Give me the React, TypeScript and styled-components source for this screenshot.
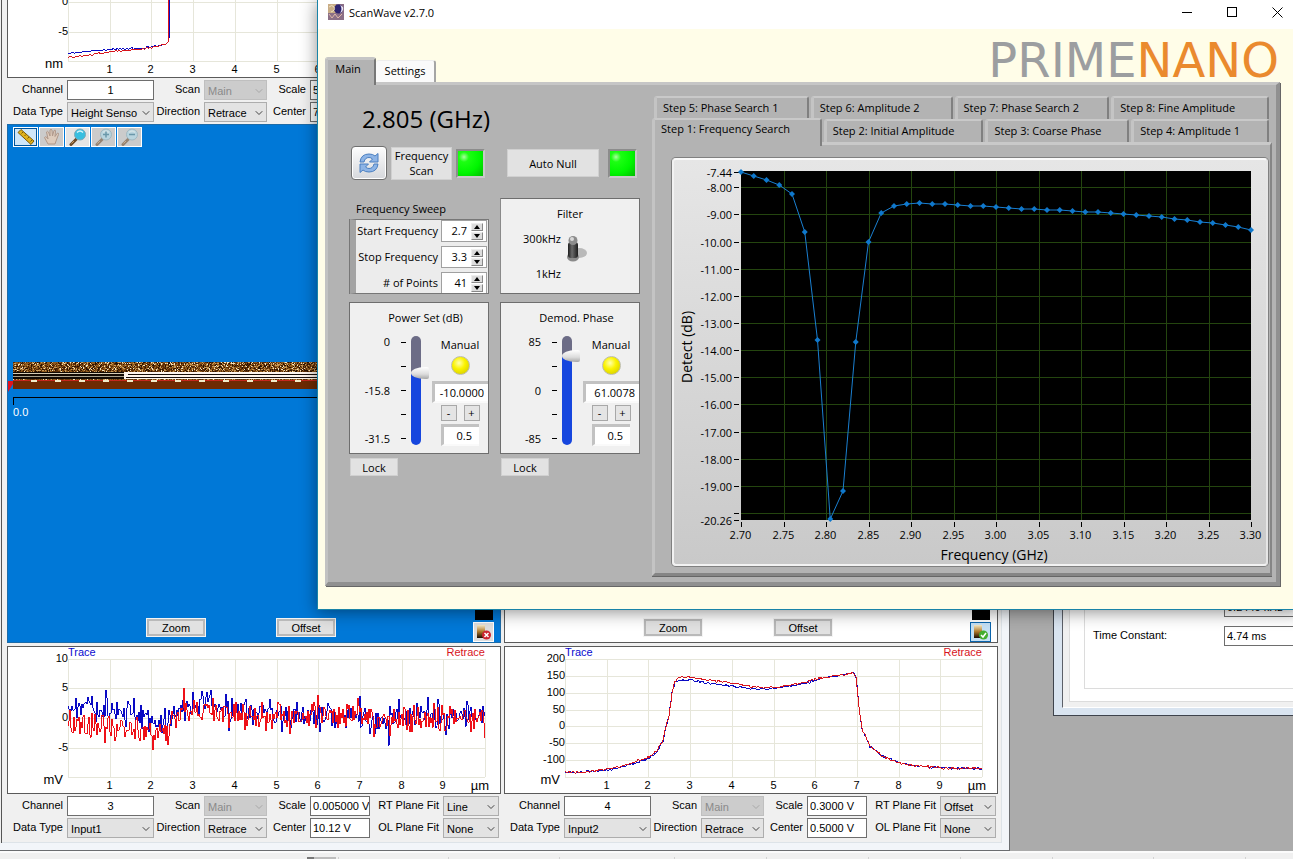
import React from 'react';
import styled, { createGlobalStyle, css } from 'styled-components';
import { ChevronDown } from 'lucide-react';

const GlobalStyle = createGlobalStyle`
  * { box-sizing: border-box; }
  body { margin: 0; background: #ababab; }
  button, input, select { font: inherit; color: inherit; margin: 0; }
`;

const legacyFont = `"Liberation Sans", Arial, sans-serif`;
const panelFont = `"Open Sans", "Noto Sans", sans-serif`;

/* ---------- helpers ---------- */

type Pt = [number, number];

function makeRandom(seed: number) {
  let s = seed;
  return () => {
    s = (s * 1664525 + 1013904223) % 4294967296;
    return s / 4294967296;
  };
}

function interpolate(knots: Pt[], x: number) {
  for (let i = 1; i < knots.length; i++) {
    if (x <= knots[i][0]) {
      const [x0, y0] = knots[i - 1];
      const [x1, y1] = knots[i];
      return y0 + ((y1 - y0) * (x - x0)) / (x1 - x0 || 1);
    }
  }
  return knots[knots.length - 1][1];
}

function buildTrace(knots: Pt[], amplitude: number, seed: number, step = 1, spikes = 0) {
  const rnd = makeRandom(seed);
  const out: string[] = [];
  const start = knots[0][0];
  const end = knots[knots.length - 1][0];
  for (let x = start; x <= end; x += step) {
    let n = (rnd() + rnd() - 1) * amplitude;
    if (spikes && rnd() < 0.08) n += (rnd() - 0.5) * spikes;
    out.push(`${x},${Math.round(interpolate(knots, x) + n)}`);
  }
  return out.join(' ');
}

/* ---------- desktop ---------- */

const Screen = styled.div`
  position: relative;
  display: flex;
  flex-direction: column;
  min-height: 100vh;
  overflow: hidden;
  background: #ababab;
`;

const Desktop = styled.main`
  position: relative;
  flex: 1;
  min-height: 851px;
`;

const StatusBar = styled.footer`
  display: flex;
  height: 8px;
  padding-left: 307px;
  padding-top: 4px;
  border-top: 2px solid #fbfbfb;
  background: #f0f0f0;
`;

const StatusCell = styled.span<{ $w: number }>`
  width: ${(p) => p.$w}px;
  border-right: 1px solid #d2d2d2;
`;

const StatusThumb = styled.span`
  width: 29px;
  border-left: 7px solid #777;
  background: #bdbdbd;
`;

/* ---------- channel window ---------- */

const ChannelWindow = styled.section`
  position: absolute;
  left: 0;
  top: 0;
  display: flex;
  align-items: flex-end;
  gap: 3px;
  padding: 0 3px 2px 5px;
  margin-left: 2px;
  background: #f0f0f0;
  font: 11px/14px ${legacyFont};
  color: #000;
  box-shadow: 0 0 0 1px #dde3e8, 0 0 0 8px #f2f5f9, 0 0 0 9px #6b6d70;
`;

const LeftEdge = styled.div`
  position: absolute;
  left: 0;
  top: 0;
  width: 2px;
  height: 843px;
  background: #f0f0f0;
  border-right: 1px solid #555;
`;

const Column = styled.div`
  width: 494px;
`;

const ChartFrame = styled.div<{ $cut?: boolean }>`
  height: ${(p) => (p.$cut ? 78 : 148)}px;
  border: 1px solid #5a5a5a;
  border-top-width: ${(p) => (p.$cut ? 0 : 1)}px;
  background: #fff;
  overflow: hidden;
  svg { display: block; }
`;

interface Series { color: string; points: string }

function TraceChart(props: {
  cut?: boolean;
  ticks: [string, number][];
  unit: string;
  bottom: number;
  series: Series[];
}) {
  const { cut, ticks, unit, bottom, series } = props;
  const top = cut ? -60 : 12;
  const xs = cut ? [1, 2, 3, 4, 5, 6] : [1, 2, 3, 4, 5, 6, 7, 8, 9];
  const xAt = (n: number) => Math.round(60 + n * 41.7) + 0.5;
  return (
    <ChartFrame $cut={cut}>
      <svg width="492" height={cut ? 77 : 146} fontSize="11" fill="#000">
        <g stroke="#e6e6da">
          {[0, ...xs, 10].map((n) => (
            <line key={n} x1={xAt(n)} x2={xAt(n)} y1={top} y2={bottom} />
          ))}
          {ticks.map(([t, y]) => (
            <line key={t} x1="60" x2="477" y1={y + 0.5} y2={y + 0.5} />
          ))}
          <line x1="60" x2="477" y1={bottom + 0.5} y2={bottom + 0.5} />
        </g>
        {series.map((s, i) => (
          <polyline key={i} points={s.points} fill="none" stroke={s.color} shapeRendering="crispEdges" />
        ))}
        {ticks.map(([t, y]) => (
          <text key={t} x="60" y={y + 3} textAnchor="end">{t}</text>
        ))}
        {xs.map((n) => (
          <text key={n} x={xAt(n) - 1} y={bottom + 12} textAnchor="middle">{n}</text>
        ))}
        <text x="55" y={bottom + 7} fontSize="13" textAnchor="end">{unit}</text>
        {!cut && (
          <>
            <text x="481" y={bottom + 13} fontSize="13" textAnchor="end">µm</text>
            <text x="60" y="9" fill="#0a0ad0">Trace</text>
            <text x="477" y="9" fill="#d8141c" textAnchor="end">Retrace</text>
          </>
        )}
      </svg>
    </ChartFrame>
  );
}

const Controls = styled.div`
  display: grid;
  grid-template-columns: 56px 87px 42px 63px 35px 60px 65px 56px;
  grid-auto-rows: 20px;
  gap: 2px 4px;
  padding: 2px 0;
`;

const FieldLabel = styled.label`
  display: flex;
  justify-content: flex-end;
  white-space: nowrap;
  line-height: 18px;
`;

const TextBox = styled.input<{ $center?: boolean }>`
  width: 100%;
  height: 20px;
  padding: 0 0 0 ${(p) => (p.$center ? 0 : 2)}px;
  border: 1px solid #6e6e6e;
  background: #fff;
  text-align: ${(p) => (p.$center ? 'center' : 'left')};
`;

const SelectWrap = styled.div<{ $disabled?: boolean }>`
  position: relative;
  height: 20px;
  color: ${(p) => (p.$disabled ? '#8a8a8a' : '#000')};
  svg {
    position: absolute;
    right: 2px;
    top: 5px;
    color: ${(p) => (p.$disabled ? '#a8a8a8' : '#444')};
    pointer-events: none;
  }
`;

const SelectBox = styled.select`
  appearance: none;
  width: 100%;
  height: 20px;
  padding: 1px 15px 0 3px;
  border: 1px solid #adadad;
  border-radius: 0;
  background: #e3e3e3;
  opacity: 1;
  &:disabled { background: #cccccc; border-color: #bfbfbf; color: #8a8a8a; }
`;

function Picker({ id, value, disabled }: { id: string; value: string; disabled?: boolean }) {
  return (
    <SelectWrap $disabled={disabled}>
      <SelectBox id={id} disabled={disabled} defaultValue={value}>
        <option>{value}</option>
      </SelectBox>
      <ChevronDown size={12} strokeWidth={2} />
    </SelectWrap>
  );
}

function ChannelControls(props: {
  channel: string; dataType: string; scale: string; center: string; rt?: string; ol?: string;
}) {
  const { channel, dataType, scale, center, rt, ol } = props;
  const id = (n: string) => `ch${channel}-${n}`;
  return (
    <Controls>
      <FieldLabel htmlFor={id('channel')}>Channel</FieldLabel>
      <TextBox id={id('channel')} $center defaultValue={channel} />
      <FieldLabel htmlFor={id('scan')}>Scan</FieldLabel>
      <Picker id={id('scan')} value="Main" disabled />
      <FieldLabel htmlFor={id('scale')}>Scale</FieldLabel>
      <TextBox id={id('scale')} defaultValue={scale} />
      {rt ? <FieldLabel htmlFor={id('rt')}>RT Plane Fit</FieldLabel> : <span />}
      {rt ? <Picker id={id('rt')} value={rt} /> : <span />}
      <FieldLabel htmlFor={id('type')}>Data Type</FieldLabel>
      <Picker id={id('type')} value={dataType} />
      <FieldLabel htmlFor={id('dir')}>Direction</FieldLabel>
      <Picker id={id('dir')} value="Retrace" />
      <FieldLabel htmlFor={id('center')}>Center</FieldLabel>
      <TextBox id={id('center')} defaultValue={center} />
      {ol ? <FieldLabel htmlFor={id('ol')}>OL Plane Fit</FieldLabel> : <span />}
      {ol ? <Picker id={id('ol')} value={ol} /> : <span />}
    </Controls>
  );
}

const ImageView = styled.div<{ $blue?: boolean }>`
  display: flex;
  flex-direction: column;
  height: 519px;
  margin-bottom: 3px;
  background: ${(p) => (p.$blue ? '#0078d7' : '#fff')};
  border: 1px solid ${(p) => (p.$blue ? '#1d6ba8' : '#5a5a5a')};
`;

const ToolRow = styled.div`
  display: flex;
  gap: 1px;
  padding: 2px 5px;
`;

const ToolButton = styled.button<{ $state?: 'on' | 'ready' }>`
  display: flex;
  align-items: center;
  justify-content: center;
  width: 25px;
  height: 20px;
  padding: 0;
  border: 1px solid #fff;
  background: ${(p) => (p.$state === 'on' ? '#cfe6f8' : p.$state === 'ready' ? '#e4e4e4' : '#cbcbcb')};
  ${(p) => p.$state === 'on' && css`box-shadow: inset 0 0 0 1px #00549a;`}
  svg { opacity: ${(p) => (p.$state ? 1 : 0.55)}; }
`;

const Lens = ({ sign }: { sign?: string }) => (
  <svg width="18" height="18" viewBox="0 0 18 18">
    <path d="M2 16.5 L8 10.5" stroke="#6b4a2a" strokeWidth="3" strokeLinecap="round" />
    <path d="M2.5 15.5 L5 13" stroke="#c99a63" strokeWidth="1" />
    <circle cx="11" cy="6.5" r="5.5" fill={sign ? '#a9dcee' : '#38bfe0'} stroke="#7fa9b8" />
    <path d="M8 4.5 Q11 1.5 14 4.5" stroke="#d9f5fb" fill="none" strokeWidth="1.5" />
    {sign && <path d={sign} stroke="#1c6f90" strokeWidth="1.5" />}
  </svg>
);

const Scanline = styled.svg`
  display: block;
  margin-top: 213px;
  flex: none;
`;

function HeightMap() {
  const rnd = makeRandom(77);
  const palette = ['#2a1200', '#5b2c06', '#8f5a1c', '#c79a5a', '#f3e3bd'];
  const paths = palette.map(() => '');
  for (let y = 0; y < 19; y++) {
    for (let x = 5; x < 316; x += 1) {
      const r = rnd();
      const k = r < 0.16 ? 0 : r < 0.48 ? 1 : r < 0.78 ? 2 : r < 0.93 ? 3 : 4;
      if (y < 11 || (y > 15 && r > 0.3)) paths[k] += `M${x} ${y}h1v1h-1z`;
    }
  }
  const dashes = Array.from({ length: 13 }, (_, i) => 23 + i * 24);
  return (
    <Scanline width="484" height="58" shapeRendering="crispEdges">
      <rect x="5" y="0" width="479" height="19" fill="#6a3a0c" />
      {paths.map((d, i) => <path key={i} d={d} fill={palette[i]} />)}
      <rect x="5" y="10" width="113" height="7" fill="#120a04" />
      <rect x="5" y="11" width="113" height="1" fill="#d8cdb4" />
      <rect x="5" y="14" width="113" height="1" fill="#a8a08c" />
      <rect x="116" y="10" width="368" height="7" fill="#fff6ee" />
      <rect x="120" y="12" width="364" height="1" fill="#17100c" />
      <rect x="118" y="15" width="366" height="1" fill="#17100c" />
      <rect x="5" y="19" width="479" height="8" fill="#6e2a02" />
      <path d="M5 18.5H484" stroke="#c6261c" />
      {dashes.map((x) => <rect key={x} x={x} y="18" width="6" height="2" fill="#f2ecc8" />)}
      <path d="M0 19h5v3l-5 8z" fill="#e3111d" shapeRendering="auto" />
      <path d="M5.5 43V35.500H484" stroke="#000" fill="none" />
      <text x="5" y="54" fontSize="11" fill="#fff">0.0</text>
    </Scanline>
  );
}

const ViewFooter = styled.div`
  display: flex;
  align-items: flex-end;
  margin-top: auto;
  padding: 0 6px 0 138px;
`;

const PushButton = styled.button`
  width: 60px;
  height: 19px;
  margin: 0 70px 5px 0;
  padding: 0;
  border: 1px solid #adadad;
  outline: 1px solid #f4f4f4;
  outline-offset: -1px;
  background: #e1e1e1;
  box-shadow: inset 0 0 0 2px #b9b9b9, inset 0 0 0 3px #e1e1e1;
`;

const ScaleStack = styled.div`
  display: flex;
  flex-direction: column;
  align-items: center;
  gap: 2px;
  margin-left: auto;
`;

const Swatch = styled.div`
  width: 18px;
  height: 14px;
  background: #000;
`;

const ScaleButton = styled.button<{ $on?: boolean }>`
  width: 21px;
  height: 20px;
  padding: 0;
  border: 1px solid ${(p) => (p.$on ? '#0a64ad' : '#fff')};
  background: ${(p) => (p.$on ? '#c5e0f5' : '#dedede')};
  svg { display: block; margin: 0 auto; }
`;

function ScaleIcon({ ok }: { ok: boolean }) {
  return (
    <svg width="17" height="16" viewBox="0 0 17 16">
      <defs>
        <linearGradient id={ok ? 'ramp-ok' : 'ramp-off'} x1="0" y1="0" x2="0" y2="1">
          <stop offset="0" stopColor="#f7ecc8" />
          <stop offset="0.5" stopColor="#b07a2c" />
          <stop offset="1" stopColor="#1c0d02" />
        </linearGradient>
      </defs>
      <rect x="2" y="1" width="8" height="13" fill={`url(#${ok ? 'ramp-ok' : 'ramp-off'})`} />
      <circle cx="11.500" cy="11" r="4.500" fill={ok ? '#43ad2e' : '#cc2430'} />
      <path d={ok ? 'M9 11l2 2 3-4' : 'M9.5 9l4 4M13.500 9l-4 4'} stroke="#fff" strokeWidth="1.500" fill="none" />
    </svg>
  );
}

function ViewActions({ ok }: { ok: boolean }) {
  return (
    <ViewFooter>
      <PushButton>Zoom</PushButton>
      <PushButton>Offset</PushButton>
      <ScaleStack>
        <Swatch />
        <ScaleButton $on={ok} aria-label="Auto scale"><ScaleIcon ok={ok} /></ScaleButton>
      </ScaleStack>
    </ViewFooter>
  );
}

const blue = '#0a0ac4';
const red = '#d8141c';

const heightSeries: Series[] = [
  { color: blue, points: buildTrace([[60, 53], [80, 51], [105, 49], [135, 48], [150, 45], [158, 44], [160, 42], [161, 38]], 1, 3) + ' 161,-5' },
  { color: red, points: buildTrace([[60, 57], [80, 55], [105, 51], [135, 49], [150, 46], [158, 44], [160, 42]], 1, 4) + ' 160,-5' },
];

const noiseSeries: Series[] = [
  { color: blue, points: buildTrace([[60, 66], [72, 58], [90, 62], [110, 65], [135, 68], [150, 71], [160, 75], [166, 67], [185, 57], [200, 56], [215, 60], [240, 64], [300, 68], [350, 71], [375, 76], [395, 68], [420, 68], [477, 69]], 15, 11, 1, 34) },
  { color: '#ee1018', points: buildTrace([[60, 75], [75, 78], [110, 82], [135, 84], [160, 88], [162, 70], [180, 64], [210, 64], [240, 69], [300, 68], [350, 69], [370, 78], [395, 71], [477, 70]], 16, 41, 1, 32) },
];

const plateau = (lift: number): Pt[] => [
  [60, 125], [78, 125], [102, 122 + lift], [118, 119 + lift], [142, 111 + lift], [152, 104 + lift], [158, 93 + lift],
  [161, 80], [164, 69], [167, 46], [170, 34 + lift], [174, 30 + lift * 3], [185, 30 + lift * 3], [202, 33 + lift * 3],
  [222, 35 + lift * 3], [250, 40 + lift * 2], [270, 40 + lift], [290, 37 + lift], [308, 33 + lift], [320, 30], [335, 28],
  [348, 26], [351, 29], [354, 60], [357, 82], [365, 99], [378, 109], [395, 116], [415, 119], [440, 121], [477, 121],
];

const plateauSeries: Series[] = [
  { color: blue, points: buildTrace(plateau(1), 1.6, 5) },
  { color: red, points: buildTrace(plateau(0), 1.6, 9) },
];

/* ---------- lock-in window ---------- */

const LockInWindow = styled.section`
  position: absolute;
  left: 1053px;
  right: -8px;
  top: 540px;
  height: 176px;
  padding: 0 0 7px 8px;
  border: 1px solid #3e434c;
  background: #d9e4f0;
  font: 11px/14px ${legacyFont};
`;

const LockInClient = styled.div`
  height: 100%;
  padding: 0 0 5px 6px;
  border-left: 1px solid #5c6068;
  border-bottom: 1px solid #fff;
  background: #f0f0f0;
`;

const LockInPage = styled.div`
  height: 100%;
  padding: 0 0 12px 14px;
  border: 1px solid #dcdcdc;
  background: #fff;
`;

const LockInGroup = styled.div`
  display: grid;
  grid-template-columns: 1fr 74px;
  row-gap: 9px;
  align-content: end;
  height: 100%;
  padding: 0 0 42px 8px;
  border: 1px solid #dcdcdc;
`;

const LockInLabel = styled.label`
  line-height: 18px;
`;

/* ---------- ScanWave window ---------- */

const WaveWindow = styled.section`
  position: absolute;
  left: 317px;
  right: -8px;
  top: 0;
  border: 1px solid #1883a8;
  border-top: 0;
  background: #fffde8;
  font: 11px/15px ${panelFont};
  color: #000;
  box-shadow: 0 2px 16px rgba(0, 0, 0, 0.45);
`;

const TitleBar = styled.header`
  display: flex;
  align-items: flex-start;
  height: 29px;
  padding: 4px 0 0 10px;
  background: #fff;
`;

const TitleText = styled.h1`
  flex: 1;
  margin: 0 0 0 5px;
  font: 11px/18px ${panelFont};
`;

const CaptionButton = styled.button`
  display: flex;
  align-items: center;
  justify-content: center;
  width: 45px;
  height: 17px;
  padding: 0;
  border: 0;
  background: none;
`;

const HeaderRow = styled.div`
  display: flex;
  align-items: flex-end;
  height: 53px;
  padding: 0 21px 0 7px;
`;

const Wordmark = styled.div`
  margin-left: auto;
  font: 48px/44px "DejaVu Sans", sans-serif;
  color: #9c9ea0;
  em { font-style: normal; color: #ea8a2e; }
`;

const MainTab = styled.button<{ $active?: boolean }>`
  position: relative;
  z-index: ${(p) => (p.$active ? 1 : 0)};
  width: ${(p) => (p.$active ? 51 : 60)}px;
  height: ${(p) => (p.$active ? 28 : 22)}px;
  margin-bottom: ${(p) => (p.$active ? -3 : 0)}px;
  padding: 0 ${(p) => (p.$active ? 6 : 0)}px ${(p) => (p.$active ? 9 : 2)}px 0;
  border: solid;
  border-width: ${(p) => (p.$active ? '3px 2px 0 3px' : '1px 2px 0 0')};
  border-color: ${(p) => (p.$active ? '#c6c6c6 #777 #b3b3b3 #c2c2c2' : '#eee #a5a5a5 #fff #fff')};
  border-radius: 3px 3px 0 0;
  background: ${(p) => (p.$active ? '#b3b3b3' : '#fafafa')};
`;

const MainPanel = styled.div`
  display: flex;
  align-items: flex-start;
  gap: 12px;
  height: 504px;
  margin: 0 20px 23px 7px;
  padding: 11px 4px 0 21px;
  border: solid;
  border-width: 3px 4px 4px 3px;
  border-color: #c6c6c6 #909090 #909090 #c2c2c2;
  background: #b3b3b3;
  box-shadow: 1px 1px 0 #666;
`;

const LeftPane = styled.div`
  display: grid;
  grid-template-columns: 140px 140px;
  grid-template-rows: 48px 54px 96px 160px 30px;
  column-gap: 11px;
  flex: none;
`;

const Readout = styled.div`
  grid-column: 1 / -1;
  padding-left: 13px;
  font-size: 24px;
  line-height: 46px;
`;

const ActionRow = styled.div<{ $indent: number; $gap: number }>`
  display: flex;
  align-items: center;
  gap: ${(p) => p.$gap}px;
  height: 38px;
  padding-left: ${(p) => p.$indent}px;
`;

const RefreshButton = styled.button`
  display: flex;
  align-items: center;
  justify-content: center;
  width: 36px;
  height: 34px;
  padding: 0;
  border: 1px solid #6f6f6f;
  border-radius: 4px;
  background: linear-gradient(#fdfdfd, #d6d8dc);
  box-shadow: inset 0 0 0 1px #fff;
`;

const FlatButton = styled.button<{ $w: number; $h: number }>`
  width: ${(p) => p.$w}px;
  height: ${(p) => p.$h}px;
  padding: 0;
  border: 1px solid #d0d0d0;
  background: #e2e2e2;
  line-height: 15px;
`;

const Led = styled.span`
  width: 29px;
  height: 29px;
  border: 2px solid;
  border-color: #8c8c8c #c9c9c9 #c9c9c9 #8c8c8c;
  background: radial-gradient(circle at 6px 6px, #a8ff9c 0, #1cff12 5px, #00f600 16px, #00b400 28px);
`;

const Sweep = styled.fieldset`
  min-width: 0;
  margin: 0;
  padding: 0;
  border: 0;
`;

const SweepTitle = styled.legend`
  padding: 0 0 0 7px;
  line-height: 21px;
`;

const SweepBox = styled.div`
  display: grid;
  grid-template-columns: 82px 46px;
  grid-auto-rows: 22px;
  row-gap: 4px;
  column-gap: 3px;
  height: 75px;
  margin-left: 1px;
  border: 1px solid #777;
  border-left: 6px solid #a3a3a3;
  background: #ececec;
  overflow: hidden;
  box-shadow: -1px 0 0 #777;
`;

const SweepLabel = styled.label`
  text-align: right;
  white-space: nowrap;
  line-height: 22px;
`;

const SpinField = styled.div`
  display: flex;
  width: 46px;
  height: 22px;
  border: 1px solid #a0a0a0;
  background: #fff;
`;

const SpinInput = styled.input`
  width: 25px;
  padding: 0 0 2px;
  border: 0;
  background: none;
  text-align: right;
`;

const SpinButtons = styled.div`
  display: flex;
  flex-direction: column;
  gap: 1px;
  margin: 2px 0 0 4px;
`;

const SpinButton = styled.button`
  display: flex;
  align-items: center;
  justify-content: center;
  width: 12px;
  height: 8px;
  padding: 0;
  border: 1px solid;
  border-color: #eee #888 #888 #eee;
  background: #dcdcdc;
  svg { flex: none; }
`;

const SWEEP: [string, string][] = [
  ['Start Frequency', '2.7'],
  ['Stop Frequency', '3.3'],
  ['# of Points', '41'],
];

const Card = styled.div`
  height: 96px;
  border: 1px solid #6e6e6e;
  border-left-color: #8a8a8a;
  background: #f0f0f0;
`;

const FilterCard = styled(Card)`
  padding-top: 7px;
`;

const CardTitle = styled.div`
  text-align: center;
  line-height: 16px;
`;

const FilterBody = styled.div`
  display: flex;
  gap: 4px;
  margin-top: 9px;
`;

const FilterLabels = styled.div`
  display: flex;
  flex-direction: column;
  gap: 20px;
  width: 60px;
  text-align: right;
`;

const ToggleButton = styled.button`
  height: 34px;
  padding: 4px 0 0;
  border: 0;
  background: none;
`;

const DialCard = styled.div`
  display: grid;
  grid-template-columns: 72px 60px;
  grid-template-rows: 27px 1fr;
  column-gap: 4px;
  height: 152px;
  margin-top: 8px;
  border: 1px solid #6e6e6e;
  background: #f0f0f0;
`;

const DialTitle = styled.div`
  grid-column: 1 / -1;
  padding: 7px 0 0 15px;
  line-height: 16px;
  text-align: center;
`;

const DialScale = styled.div`
  display: grid;
  grid-template-columns: 40px 5px 18px;
  column-gap: 11px;
  height: 109px;
  margin-top: 6px;
`;

const ScaleText = styled.div`
  display: flex;
  flex-direction: column;
  justify-content: space-between;
  text-align: right;
  line-height: 12px;
`;

const TickColumn = styled.div`
  display: flex;
  flex-direction: column;
  justify-content: space-between;
  padding: 6px 0;
  i { height: 1px; background: #000; }
`;

const Fader = styled.input<{ $fill: number }>`
  appearance: none;
  writing-mode: vertical-lr;
  direction: rtl;
  width: 18px;
  height: 109px;
  margin-left: -6px;
  background: none;
  &::-webkit-slider-runnable-track {
    width: 10px;
    height: 109px;
    margin: 0 8px 0 0;
    border-radius: 5px;
    background: linear-gradient(#6c6c86 ${(p) => p.$fill}%, #1646de ${(p) => p.$fill}%);
  }
  &::-webkit-slider-thumb {
    appearance: none;
    width: 18px;
    height: 12px;
    border-radius: 14px 2px 2px 14px / 6px 2px 2px 6px;
    background: linear-gradient(#fff, #dcdcdc 60%, #a8a8a8);
  }
`;

const DialSide = styled.div`
  display: flex;
  flex-direction: column;
  align-items: center;
  width: 56px;
  margin-left: 6px;
  padding-top: 7px;
`;

const ManualLed = styled.span`
  width: 19px;
  height: 19px;
  margin: 4px 0 6px;
  border: 1px solid #bdbda8;
  border-radius: 50%;
  background: radial-gradient(circle at 7px 6px, #ffffb0, #fbf300 6px, #b8b000 18px);
`;

const SunkenInput = styled.input<{ $w: number; $pad: number }>`
  width: ${(p) => p.$w}px;
  height: 22px;
  padding: 0 ${(p) => p.$pad}px 0 0;
  border: solid;
  border-width: 3px 0 2px 3px;
  border-color: #c2c2c2 #fafafa #fafafa #c2c2c2;
  background: #fff;
  text-align: right;
`;

const StepRow = styled.div`
  display: flex;
  gap: 7px;
  margin: 2px 0 3px;
`;

const StepButton = styled.button`
  width: 16px;
  height: 16px;
  padding: 0;
  border: 1px solid #a8a8a8;
  background: #e4e4e4;
  line-height: 12px;
`;

const LockButton = styled(FlatButton)`
  margin: 4px 0 0 1px;
`;

function Dial(props: {
  title: string; labels: string[]; min: number; max: number; value: number; text: string;
}) {
  const { title, labels, min, max, value, text } = props;
  const fill = Math.round(((max - value) / (max - min)) * 89 + 5.5);
  return (
    <DialCard>
      <DialTitle>{title}</DialTitle>
      <DialScale>
        <ScaleText>{labels.map((l) => <span key={l}>{l}</span>)}</ScaleText>
        <TickColumn><i /><i /><i /><i /><i /></TickColumn>
        <Fader type="range" aria-label={title} min={min} max={max} step="any" defaultValue={value} $fill={fill} />
      </DialScale>
      <DialSide>
        <span>Manual</span>
        <ManualLed />
        <SunkenInput $w={56} $pad={4} aria-label={`${title} value`} defaultValue={text} />
        <StepRow>
          <StepButton>-</StepButton>
          <StepButton>+</StepButton>
        </StepRow>
        <SunkenInput $w={38} $pad={7} aria-label={`${title} step`} defaultValue="0.5" />
      </DialSide>
    </DialCard>
  );
}

/* ---------- step tabs and sweep chart ---------- */

const StepPane = styled.div`
  flex: 1;
  min-width: 0;
`;

const StepTabRow = styled.div<{ $cols: string; $pad: number }>`
  display: grid;
  grid-template-columns: ${(p) => p.$cols};
  gap: 2px;
  padding: 0 3px 0 ${(p) => p.$pad}px;
`;

const StepTab = styled.button<{ $active?: boolean }>`
  position: relative;
  z-index: ${(p) => (p.$active ? 1 : 0)};
  height: ${(p) => (p.$active ? 28 : 23)}px;
  margin: ${(p) => (p.$active ? '-1px 0 -4px' : '0')};
  padding: 0 0 ${(p) => (p.$active ? 9 : 2)}px 6px;
  border: solid;
  border-width: 2px 2px 0 3px;
  border-color: #c9c9c9 #808080 #b3b3b3 #c4c4c4;
  border-radius: 3px 3px 0 0;
  background: #b3b3b3;
  text-align: left;
  white-space: nowrap;
`;

const StepPanel = styled.div`
  height: 434px;
  padding: 13px 2px 0 17px;
  border: solid;
  border-width: 3px 2px 3px 3px;
  border-color: #c9c9c9 #858585 #858585 #c4c4c4;
  box-shadow: 0 1px 0 #666;
`;

const GraphFrame = styled.div`
  height: 408px;
  border: 2px solid;
  border-color: #fafafa #e6e6e6 #f2f2f2 #f2f2f2;
  border-radius: 4px;
  background: linear-gradient(#e6e6e6, #c9c9c9);
  box-shadow: 0 0 0 1px #808080;
  overflow: hidden;
  svg { display: block; }
`;

const sweepPixels = [
  0, 4, 8, 13, 22, 60, 168, 347, 319, 170, 70, 41, 34, 32, 31, 32, 32, 33, 34, 34, 35, 36, 37, 37, 38, 38, 39, 40, 40,
  41, 42, 43, 44, 45, 47, 48, 50, 51, 53, 55, 58,
];

function SweepGraph() {
  const left = 67;
  const top = 11;
  const right = left + 510;
  const bottom = top + 349;
  const pts = sweepPixels.map((y, i): Pt => [left + i * 12.75, top + 1 + y]);
  const yAt = (v: number) => Math.round(top + 1 + (-7.44 - v) * 27.15) + 0.5;
  const xAt = (i: number) => Math.round(left + i * 42.5) + 0.5;
  const yVals = Array.from({ length: 12 }, (_, i) => -8 - i);
  const xVals = Array.from({ length: 13 }, (_, i) => i);
  return (
    <svg width="594" height="404" fill="#000" fontSize="11">
      <rect x={left} y={top} width="510" height="349" />
      <g stroke="#24450f">
        {[...yVals, -20].map((v) => <line key={v} x1={left} x2={right} y1={yAt(v)} y2={yAt(v)} />)}
        {xVals.slice(1, 12).map((i) => <line key={i} x1={xAt(i)} x2={xAt(i)} y1={top} y2={bottom} />)}
      </g>
      <g stroke="#000">
        {[-7.44, ...yVals, -20, -20.26].map((v) => (
          <line key={v} x1={left - 7} x2={left - 2} y1={yAt(v)} y2={yAt(v)} />
        ))}
        {xVals.map((i) => <line key={i} x1={xAt(i)} x2={xAt(i)} y1={bottom + 2} y2={bottom + 7} />)}
      </g>
      <polyline points={pts.map((p) => p.join(',')).join(' ')} fill="none" stroke="#1a7fd0" />
      {pts.map(([x, y], i) => (
        <path key={i} d={`M${x} ${y - 3}l3 3l-3 3l-3 -3z`} fill="#0f78cc" />
      ))}
      {[-7.44, ...yVals, -20.26].map((v) => (
        <text key={v} x={left - 9} y={yAt(v) + 4} textAnchor="end">{v.toFixed(2)}</text>
      ))}
      {xVals.map((i) => (
        <text key={i} x={xAt(i) - 1} y={bottom + 19} textAnchor="middle">{(2.7 + i * 0.05).toFixed(2)}</text>
      ))}
      <text x="320" y={bottom + 40} fontSize="14" textAnchor="middle">Frequency (GHz)</text>
      <text transform="translate(18 187) rotate(-90)" fontSize="14" textAnchor="middle">Detect (dB)</text>
    </svg>
  );
}

/* ---------- page ---------- */

export default function App() {
  return (
    <Screen>
      <GlobalStyle />
      <Desktop>
        <ChannelWindow>
          <Column>
            <TraceChart cut unit="nm" bottom={61} ticks={[['0', 2], ['-5', 32]]} series={heightSeries} />
            <ChannelControls channel="1" dataType="Height Senso" scale="5" center="7" />
            <ImageView $blue>
              <ToolRow>
                <ToolButton $state="on" aria-label="Ruler">
                  <svg width="18" height="16" viewBox="0 0 18 16">
                    <path d="M1 3.500L4 .5L17 12L14 15.500Z" fill="#e0b21c" stroke="#7d5a08" />
                    <path d="M6 3l-1.500 1.500M9 5.500l-1.500 1.500M12 8l-1.500 1.500M15 11l-1.500 1.500" stroke="#7d5a08" />
                  </svg>
                </ToolButton>
                <ToolButton aria-label="Pan">
                  <svg width="18" height="18" viewBox="0 0 18 18">
                    <path d="M5 16L1.500 9.500Q2 8 4 9.500L5 11L3.500 4Q4.500 2.500 5.500 4L7 8L7 2Q8 .5 9 2L9.500 8L11 2.500Q12.500 1.500 12.500 3L12 8.500L14.500 5Q16 5 15.500 6.500L13 13L12 16Z" fill="#eccbb0" stroke="#9a6f55" />
                  </svg>
                </ToolButton>
                <ToolButton $state="ready" aria-label="Zoom window"><Lens /></ToolButton>
                <ToolButton aria-label="Zoom in"><Lens sign="M8 6.500h6M11 3.500v6" /></ToolButton>
                <ToolButton aria-label="Zoom out"><Lens sign="M8 6.500h6" /></ToolButton>
              </ToolRow>
              <HeightMap />
              <ViewActions ok={false} />
            </ImageView>
            <TraceChart unit="mV" bottom={130} ticks={[['10', 12], ['5', 41], ['0', 71], ['-5', 101]]} series={noiseSeries} />
            <ChannelControls channel="3" dataType="Input1" scale="0.005000 V" center="10.12 V" rt="Line" ol="None" />
          </Column>
          <Column>
            <ImageView><ViewActions ok /></ImageView>
            <TraceChart
              unit="mV"
              bottom={130}
              ticks={[['200', 12], ['150', 29], ['100', 46], ['50', 63], ['0', 79], ['-50', 96], ['-100', 113]]}
              series={plateauSeries}
            />
            <ChannelControls channel="4" dataType="Input2" scale="0.3000 V" center="0.5000 V" rt="Offset" ol="None" />
          </Column>
        </ChannelWindow>
        <LeftEdge />

        <LockInWindow>
          <LockInClient>
            <LockInPage>
              <LockInGroup>
                <span />
                <TextBox aria-label="Bandwidth" defaultValue="0.2440 kHz" />
                <LockInLabel htmlFor="time-constant">Time Constant:</LockInLabel>
                <TextBox id="time-constant" defaultValue="4.74 ms" />
              </LockInGroup>
            </LockInPage>
          </LockInClient>
        </LockInWindow>

        <WaveWindow>
          <TitleBar>
            <svg width="16" height="16" viewBox="0 0 16 16">
              <rect width="16" height="16" fill="#8b6f86" />
              <path d="M0 0h8v9H0z" fill="#c9ad86" />
              <circle cx="10.500" cy="5" r="4.500" fill="#2e2470" />
              <path d="M12 1q3 4 0 8q4-2 3-6z" fill="#eae6f6" />
              <path d="M1 3q3-3 5 0t-3 5" stroke="#efe0c0" fill="none" />
              <path d="M1 10l3 4 3-4 3 4 4-4" stroke="#e0b8a8" fill="none" />
            </svg>
            <TitleText>ScanWave v2.7.0</TitleText>
            <CaptionButton aria-label="Minimize">
              <svg width="11" height="11"><path d="M0 5.500H10" stroke="#000" /></svg>
            </CaptionButton>
            <CaptionButton aria-label="Maximize">
              <svg width="11" height="11"><rect x=".5" y=".5" width="9" height="9" fill="none" stroke="#000" /></svg>
            </CaptionButton>
            <CaptionButton aria-label="Close">
              <svg width="11" height="11"><path d="M.5 .5L10.500 10.500M10.500 .5L.5 10.500" stroke="#000" /></svg>
            </CaptionButton>
          </TitleBar>

          <HeaderRow>
            <MainTab $active>Main</MainTab>
            <MainTab>Settings</MainTab>
            <Wordmark>PRIME<em>NANO</em></Wordmark>
          </HeaderRow>

          <MainPanel>
            <LeftPane>
              <Readout>2.805 (GHz)</Readout>
              <ActionRow $indent={2} $gap={4}>
                <RefreshButton aria-label="Refresh">
                  <svg width="24" height="24" viewBox="0 0 24 24">
                    <path d="M3 11Q4 3 12 3Q16 3 18 5L21 2.500V11H12.500L15.500 8Q14 6.500 12 6.500Q8 6.500 7 11Z" fill="#8db4e6" stroke="#4a7fc0" />
                    <path d="M21 13Q20 21 12 21Q8 21 6 19L3 21.500V13H11.500L8.500 16Q10 17.500 12 17.500Q16 17.500 17 13Z" fill="#8db4e6" stroke="#4a7fc0" />
                  </svg>
                </RefreshButton>
                <FlatButton $w={61} $h={33}>Frequency Scan</FlatButton>
                <Led />
              </ActionRow>
              <ActionRow $indent={7} $gap={9}>
                <FlatButton $w={92} $h={28}>Auto Null</FlatButton>
                <Led />
              </ActionRow>

              <Sweep>
                <SweepTitle>Frequency Sweep</SweepTitle>
                <SweepBox>
                  {SWEEP.map(([label, value]) => (
                    <React.Fragment key={label}>
                      <SweepLabel htmlFor={label}>{label}</SweepLabel>
                      <SpinField>
                        <SpinInput id={label} defaultValue={value} />
                        <SpinButtons>
                          <SpinButton aria-label={`${label} up`}>
                            <svg width="6" height="4"><path d="M0 4L3 0L6 4Z" /></svg>
                          </SpinButton>
                          <SpinButton aria-label={`${label} down`}>
                            <svg width="6" height="4"><path d="M0 0L3 4L6 0Z" /></svg>
                          </SpinButton>
                        </SpinButtons>
                      </SpinField>
                    </React.Fragment>
                  ))}
                </SweepBox>
              </Sweep>
              <FilterCard>
                <CardTitle>Filter</CardTitle>
                <FilterBody>
                  <FilterLabels>
                    <span>300kHz</span>
                    <span>1kHz</span>
                  </FilterLabels>
                  <ToggleButton aria-label="Filter">
                    <svg width="24" height="28" viewBox="0 0 24 28">
                      <defs>
                        <linearGradient id="stick" x1="0" x2="1" y1="0" y2="0">
                          <stop offset="0" stopColor="#1c1c1c" />
                          <stop offset="0.4" stopColor="#6a6a6a" />
                          <stop offset="1" stopColor="#1c1c1c" />
                        </linearGradient>
                      </defs>
                      <ellipse cx="14" cy="18" rx="8" ry="5" fill="#b9b9b9" />
                      <ellipse cx="8" cy="22" rx="6" ry="4.500" fill="#8a8a8a" />
                      <rect x="3" y="7" width="10" height="16" rx="3" fill="url(#stick)" />
                      <circle cx="8" cy="5.500" r="4.500" fill="#8c8c8c" />
                      <circle cx="7" cy="4" r="2" fill="#d8d8d8" />
                    </svg>
                  </ToggleButton>
                </FilterBody>
              </FilterCard>

              <Dial title="Power Set (dB)" labels={['0', '-15.8', '-31.5']} min={-31.5} max={0} value={-10} text="-10.0000" />
              <Dial title="Demod. Phase" labels={['85', '0', '-85']} min={-85} max={85} value={61.0078} text="61.0078" />

              <LockButton $w={48} $h={18}>Lock</LockButton>
              <LockButton $w={48} $h={18}>Lock</LockButton>
            </LeftPane>

            <StepPane>
              <StepTabRow $cols="155fr 142fr 155fr 158fr" $pad={2}>
                <StepTab>Step 5: Phase Search 1</StepTab>
                <StepTab>Step 6: Amplitude 2</StepTab>
                <StepTab>Step 7: Phase Search 2</StepTab>
                <StepTab>Step 8: Fine Amplitude</StepTab>
              </StepTabRow>
              <StepTabRow $cols="170fr 160fr 144fr 138fr" $pad={0}>
                <StepTab $active>Step 1: Frequency Search</StepTab>
                <StepTab>Step 2: Initial Amplitude</StepTab>
                <StepTab>Step 3: Coarse Phase</StepTab>
                <StepTab>Step 4: Amplitude 1</StepTab>
              </StepTabRow>
              <StepPanel>
                <GraphFrame><SweepGraph /></GraphFrame>
              </StepPanel>
            </StepPane>
          </MainPanel>
        </WaveWindow>
      </Desktop>
      <StatusBar>
        <StatusThumb />
        <StatusCell $w={3} />
        <StatusCell $w={110} />
        <StatusCell $w={111} />
        <StatusCell $w={115} />
        <StatusCell $w={92} />
        <StatusCell $w={102} />
        <StatusCell $w={92} />
        <StatusCell $w={92} />
        <StatusCell $w={101} />
        <StatusCell $w={92} />
      </StatusBar>
    </Screen>
  );
}
